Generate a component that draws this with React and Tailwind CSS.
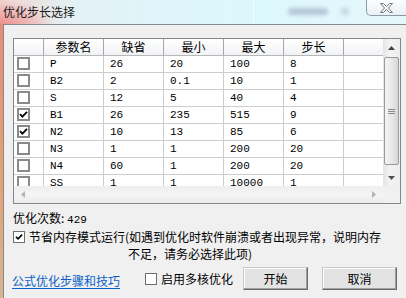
import React from 'react';

const cjk = "font-['Noto_Sans_CJK_SC','Noto_Sans',sans-serif]";
const mono = "font-['Liberation_Mono','Noto_Sans_CJK_SC',monospace]";

const rows = [
  [false, 'P', '26', '20', '100', '8'],
  [false, 'B2', '2', '0.1', '10', '1'],
  [false, 'S', '12', '5', '40', '4'],
  [true, 'B1', '26', '235', '515', '9'],
  [true, 'N2', '10', '13', '85', '6'],
  [false, 'N3', '1', '1', '200', '20'],
  [false, 'N4', '60', '1', '200', '20'],
  [false, 'SS', '1', '1', '10000', '1'],
];

const headers = ['', '参数名', '缺省', '最小', '最大', '步长', ''];

const Check = ({ size = 9 }) => (
  <svg width={size} height={size} viewBox="0 0 9 9">
    <path d="M1 4.2 L3.4 6.6 L8 1.8" fill="none" stroke="#000" strokeWidth="1.8" />
  </svg>
);

const GridBox = ({ checked }) => (
  <div className="w-[13px] h-[13px] border-2 border-[#8a8a8a] bg-white flex items-center justify-center">
    {checked && <Check />}
  </div>
);

const DlgBox = ({ checked }) => (
  <div className="w-[12px] h-[12px] border border-[#6e6e6e] bg-white flex items-center justify-center shrink-0">
    {checked && <Check size={8} />}
  </div>
);

const Arrow = ({ dir, color = '#404040' }) => {
  const d = {
    up: 'M0 4 L3.5 0 L7 4 Z',
    down: 'M0 0 L7 0 L3.5 4 Z',
    left: 'M4 0 L4 7 L0 3.5 Z',
    right: 'M0 0 L4 3.5 L0 7 Z',
  }[dir];
  const vertical = dir === 'up' || dir === 'down';
  return (
    <svg width={vertical ? 7 : 4} height={vertical ? 4 : 7} viewBox={vertical ? '0 0 7 4' : '0 0 4 7'}>
      <path d={d} fill={color} />
    </svg>
  );
};

const App = () => {
  return (
    <div className={`w-[406px] h-[298px] overflow-hidden flex flex-col ${cjk} text-[12px] text-black`}>
      {/* title bar */}
      <div className="relative h-[24px] shrink-0 bg-[radial-gradient(ellipse_55px_26px_at_0px_26px,#ee8c8c,transparent),linear-gradient(90deg,#f1d4d0,#e3f1f5_70px,#dcf8fd_250px,#e6f7fb_406px)]">
        <div className="absolute left-[253px] top-0 w-[1px] h-[24px] bg-[#f2fcff]" />
        <div className="absolute left-[288px] top-[8px] w-[40px] h-[7px] rounded-full bg-[#9db0c6] blur-[2px] opacity-70" />
        <div className="absolute left-[341px] top-[8px] w-[8px] h-[7px] rounded-full bg-[#a8bccd] blur-[2px] opacity-60" />
        <div className="pl-[3px] pt-[2px] leading-[20px] text-[12px] text-[#1a1a1a]">优化步长选择</div>
        <div className="absolute right-0 top-0 w-[40px] h-[16px] border-l border-b border-[#8d9aa6] rounded-bl-[5px] bg-[linear-gradient(#fbfdfe,#eaf1f4)] flex items-center justify-center">
          <svg width="13" height="10" viewBox="0 0 13 10">
            <polygon
              points="0.5,0.5 3.5,0.5 6.5,3.5 9.5,0.5 12.5,0.5 8.5,5 12.5,9.5 9.5,9.5 6.5,6.5 3.5,9.5 0.5,9.5 4.5,5"
              fill="#f5f6f7"
              stroke="#6f7a86"
              strokeWidth="1"
            />
          </svg>
        </div>
      </div>

      <div className="flex flex-1">
        {/* left frame */}
        <div className="w-[3px] bg-[linear-gradient(#ec8a78,#e6a070_50%,#d9b48e)]" />

        {/* client area */}
        <div className="flex-1 border-l border-t border-[#7f8a92] bg-[#f0f0f0] flex flex-col">
          {/* list grid */}
          <div className="ml-[9px] mt-[13px] w-[388px] border border-[#828790] bg-white flex flex-col">
            <div className="flex">
              <div className="w-[369px] h-[147px] overflow-hidden">
                <div className="grid grid-cols-[30px_60px_60px_60px_60px_60px_39px] h-[17px]">
                  {headers.map((h, i) => (
                    <div
                      key={i}
                      className={`h-[17px] bg-[linear-gradient(#ffffff,#f1f2f4)] border-b border-[#b8b8b8] ${
                        i < 6 ? 'border-r border-r-[#a8a8a8]' : ''
                      } text-center leading-[16px]`}
                    >
                      {h}
                    </div>
                  ))}
                </div>
                {rows.map((r, ri) => (
                  <div key={ri} className="grid grid-cols-[30px_60px_60px_60px_60px_60px_39px] h-[17px]">
                    <div className="h-[17px] border-r border-b border-[#cdcdcd] pl-[3px] pt-[1px]">
                      <GridBox checked={r[0]} />
                    </div>
                    {r.slice(1).map((v, ci) => (
                      <div
                        key={ci}
                        className={`h-[17px] border-r border-b border-[#cdcdcd] pl-[6px] ${mono} text-[11px] leading-[17px]`}
                      >
                        {v}
                      </div>
                    ))}
                    <div className="h-[17px] border-b border-[#cdcdcd]" />
                  </div>
                ))}
              </div>

              {/* vertical scrollbar */}
              <div className="w-[17px] h-[147px] flex flex-col bg-[linear-gradient(90deg,#e4e4e4,#f3f3f3_40%,#ededed)]">
                <div className="h-[17px] flex items-center justify-center">
                  <Arrow dir="up" />
                </div>
                <div className="flex-1 px-[1px] pt-[1px] pb-[4px]">
                  <div className="h-full rounded-[2px] border border-[#9a9a9a] bg-[linear-gradient(90deg,#f4f4f4,#e9e9e9_50%,#d6d6d6)] flex items-center justify-center">
                    <div className="flex flex-col gap-[1px]">
                      <div className="w-[7px] h-[1px] bg-[#8a8a8a]" />
                      <div className="w-[7px] h-[1px] bg-[#8a8a8a]" />
                      <div className="w-[7px] h-[1px] bg-[#8a8a8a]" />
                    </div>
                  </div>
                </div>
                <div className="h-[17px] flex items-center justify-center">
                  <Arrow dir="down" color="#505050" />
                </div>
              </div>
            </div>

            {/* horizontal scrollbar */}
            <div className="flex h-[17px]">
              <div className="w-[369px] flex items-center justify-between px-[7px] bg-[linear-gradient(#eeeeee,#f5f5f5_50%,#ebebeb)]">
                <Arrow dir="left" color="#b4b4b4" />
                <Arrow dir="right" color="#b4b4b4" />
              </div>
              <div className="w-[17px] bg-[#f0f0f0]" />
            </div>
          </div>

          {/* count */}
          <div className="ml-[9px] mt-[7px] leading-[14px]">
            优化次数: <span className={`${mono} text-[11px]`}>429</span>
          </div>

          {/* memory saving option */}
          <div className="ml-[9px] mt-[1px] flex">
            <div className="pt-[3px]">
              <DlgBox checked />
            </div>
            <div className="ml-[4px] leading-[17px] text-[12px]">
              <div className="whitespace-nowrap">节省内存模式运行(如遇到优化时软件崩溃或者出现异常，说明内存</div>
              <div className="pl-[99px] whitespace-nowrap">不足，请务必选择此项)</div>
            </div>
          </div>

          {/* bottom row */}
          <div className="ml-[8px] mt-[5px] flex items-center h-[23px]">
            <a className="text-[#0b5fc9] underline underline-offset-2 whitespace-nowrap leading-[17px] mt-[3px]">
              公式优化步骤和技巧
            </a>
            <div className="ml-[25px] flex items-center">
              <DlgBox />
              <span className="ml-[4px] whitespace-nowrap">启用多核优化</span>
            </div>
            <button className="ml-[10px] w-[65px] h-[23px] bg-[#e3e3e3] border border-[#c9c9c9] border-r-[#696969] border-b-[#696969] shadow-[inset_-1px_-1px_0_#a0a0a0,inset_1px_1px_0_#ffffff]">
              开始
            </button>
            <button className="ml-[14px] w-[75px] h-[23px] bg-[#e3e3e3] border border-[#c9c9c9] border-r-[#696969] border-b-[#696969] shadow-[inset_-1px_-1px_0_#a0a0a0,inset_1px_1px_0_#ffffff]">
              取消
            </button>
          </div>
        </div>
      </div>
    </div>
  );
};

export default App;
